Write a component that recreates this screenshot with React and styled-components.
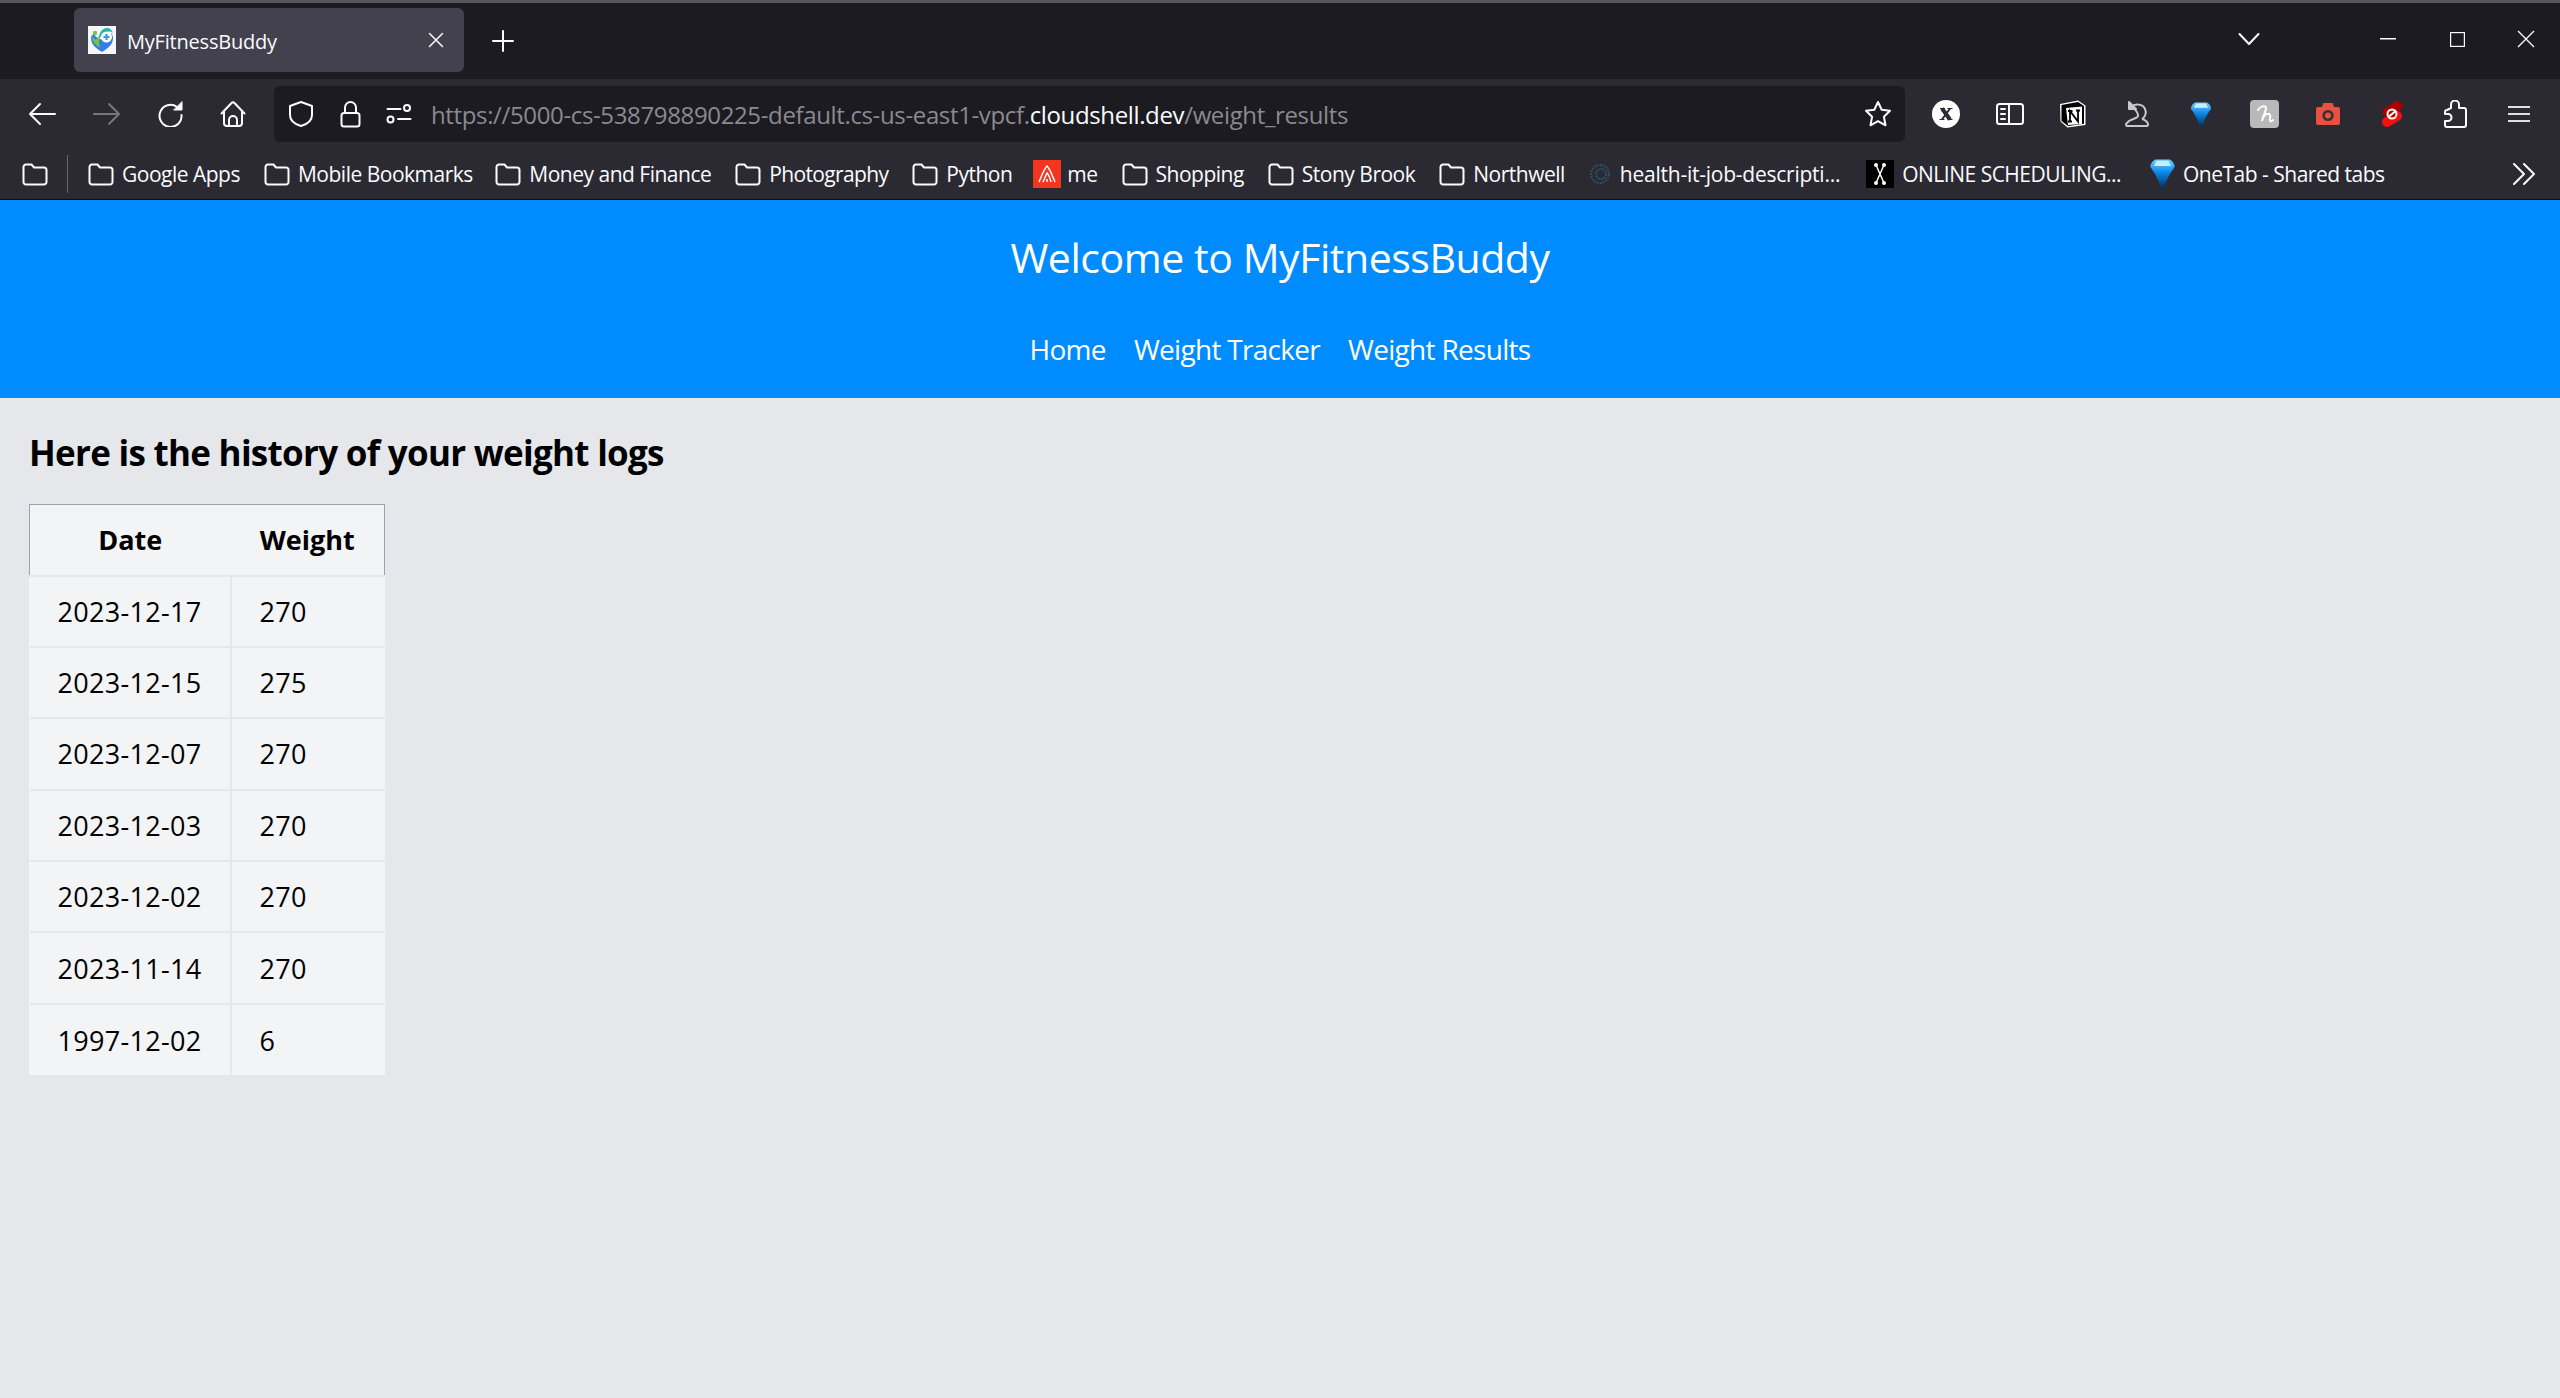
import React from 'react';
import styled, { createGlobalStyle } from 'styled-components';

const Global = createGlobalStyle`
  html, body { margin: 0; padding: 0; background: #e5e7eb; }
  body { font-family: "Open Sans", "Noto Sans", "Liberation Sans", sans-serif; }
  * { box-sizing: border-box; }
`;
const Page = styled.div`width: 2560px; height: 1398px; overflow: hidden; display: flex; flex-direction: column; background: #e5e7eb;`;
const TitleBar = styled.div`height: 79px; background: #1c1b22; border-top: 3px solid #55555a; display: flex; align-items: flex-start; padding-left: 74px;`;
const Tab = styled.div`width: 390px; height: 64px; margin-top: 5px; background: #42414d; border-radius: 6px; display: flex; align-items: center; padding: 0 20px 0 14px; color: #fbfbfe; font-size: 20px; letter-spacing: -0.2px;`;
const TabTitle = styled.span`margin-left: 11px; flex: 1; position: relative; top: 1px;`;
const IconBtn = styled.span`display: inline-flex; flex: none; align-items: center; justify-content: center; width: ${p => p.$w || 28}px; height: ${p => p.$h || 28}px; margin-left: ${p => p.$ml || 0}px;`;
const TitleRight = styled.div`margin-left: auto; display: flex; align-items: center; height: 72px; padding-right: 20px;`;
const NavBar = styled.div`height: 70px; background: #2b2a33; display: flex; align-items: center; padding-left: 28px;`;
const UrlBox = styled.div`width: 1631px; height: 56px; margin-left: 27px; background: #1c1b22; border-radius: 6px; display: flex; align-items: center; padding-left: 14px; padding-right: 13px; font-size: 24px; letter-spacing: -0.36px; color: #8a8a90; white-space: nowrap;`;
const UrlText = styled.span`margin-left: 19px; flex: 1;`;
const Host = styled.span`color: #fbfbfe;`;
const Extensions = styled.div`display: flex; align-items: center; margin-left: 9px;`;
const Slot = styled.span`display: inline-flex; align-items: center; justify-content: center; width: 63.700px; height: 40px;`;
const BookmarkBar = styled.div`height: 51px; background: #2b2a33; border-bottom: 1px solid #0c0c0d; display: flex; align-items: center; padding-left: 22px; padding-right: 24px; color: #fbfbfe; font-size: 21px; letter-spacing: -0.5px; white-space: nowrap;`;
const Divider = styled.span`width: 1px; height: 38px; background: #6a6a70; margin: 0 20px 0 19px;`;
const Bookmark = styled.span`display: inline-flex; align-items: center; gap: ${p => p.$gap || 8}px; margin-right: ${p => p.$mr || 24}px; letter-spacing: ${p => p.$ls ?? -0.5}px;`;
const Overflow = styled.span`margin-left: auto; display: inline-flex;`;
const Header = styled.header`height: 198px; background: #008cff; color: #fff; text-align: center; padding-top: 32px;`;
const Title = styled.h1`margin: 0; font-size: 41px; font-weight: 400; line-height: 50px; letter-spacing: -0.44px;`;
const Links = styled.nav`display: flex; justify-content: center; gap: 28px; margin-top: 49px; font-size: 28px; line-height: 36px; letter-spacing: -0.7px;`;
const Main = styled.main`padding: 32px 29px;`;
const Heading = styled.h2`margin: 0 0 28px; font-size: 35px; font-weight: 700; line-height: 46px; color: #000; letter-spacing: -0.72px; white-space: nowrap;`;
const Table = styled.table`border-collapse: collapse; background: #f3f4f6; font-size: 27px; color: #000; table-layout: fixed; width: 355px;`;
const Th = styled.th`width: ${p => p.$width}px; height: 71px; padding: 0 28px; border: 1px solid #9ca3af; border-bottom: 0; border-left-width: ${p => p.$first ? 1 : 0}px; border-right-width: ${p => p.$first ? 0 : 1}px; font-weight: 700; text-align: center; white-space: nowrap;`;
const Td = styled.td`height: 71.400px; padding: 0 0 0 28px; border-top: 2px solid #e5e7eb; border-right: ${p => p.$first ? '2px solid #e5e7eb' : '0'}; text-align: left; letter-spacing: 0.3px; white-space: nowrap;`;

const s = { fill: 'none', stroke: '#fbfbfe', strokeWidth: 2, strokeLinecap: 'round', strokeLinejoin: 'round' };
const Folder = () => <svg width="26" height="23" viewBox="0 0 26 23" {...s}><path d="M1.500 4a2.500 2.500 0 0 1 2.500-2.500h5.500l2.500 3h10a2.500 2.500 0 0 1 2.500 2.500v12a2.500 2.500 0 0 1-2.500 2.500H4A2.500 2.500 0 0 1 1.500 19z" /></svg>;
const Favicon = () => (
  <svg width="28" height="28" viewBox="0 0 28 28">
    <rect width="28" height="28" fill="#f4f6f8" />
    <path d="M3 12c0 7 6 11 11 14 5-3 11-7 11-14 0-2-1-4-2-5-1 5-6 8-11 6-3-1-5-3-6-5-2 1-3 2-3 4z" fill="#2f7fe6" />
    <path d="M4 10c0 6 4 9 8 12-1-5-2-9 2-14-3 2-5 4-6 6-1-1-3-2-4-4z" fill="#7cc242" />
    <circle cx="7" cy="7" r="2.200" fill="#7cc242" />
    <path d="M11 12C11 6 15 2 19 2c3 0 5 2 6 5-2-2-5-2-7 0-3 1-5 3-7 5z" fill="#1fb5b0" />
    <circle cx="18.500" cy="11" r="5.500" fill="#fff" />
    <path d="M18.500 8v6M15.500 11h6" stroke="#2f9fe6" strokeWidth="2.200" />
  </svg>
);
const Drop = ({ w = 22, h = 26, id }) => (
  <svg width={w} height={h} viewBox="0 0 22 26">
    <defs><linearGradient id={id} x1="0" x2="0" y1="0" y2="1"><stop offset="0" stopColor="#6fd0ff" /><stop offset=".45" stopColor="#0a86e8" /><stop offset="1" stopColor="#052c50" /></linearGradient></defs>
    <path d="M5 .5h12c2.500 1 4.500 3.500 4.500 6.500-3.500 5-7.500 11-9 19h-3C8 18 4 12 .5 7 .5 4 2.500 1.500 5 .5z" fill={`url(#${id})`} />
    <path d="M6 1.500h10l2.500 4.500H3.500z" fill="#c4efff" />
  </svg>
);

const rows = [['2023-12-17','270'],['2023-12-15','275'],['2023-12-07','270'],['2023-12-03','270'],['2023-12-02','270'],['2023-11-14','270'],['1997-12-02','6']];

export default function App() {
  return (
    <Page>
      <Global />
      <TitleBar>
        <Tab>
          <Favicon />
          <TabTitle>MyFitnessBuddy</TabTitle>
          <svg width="16" height="16" viewBox="0 0 16 16" {...s} strokeWidth="1.500"><path d="M1.500 1.500l13 13M14.500 1.500l-13 13" /></svg>
        </Tab>
        <IconBtn $ml={25} $h={76}><svg width="22" height="22" viewBox="0 0 22 22" {...s}><path d="M11 1v20M1 11h20" /></svg></IconBtn>
        <TitleRight>
          <IconBtn><svg width="22" height="14" viewBox="0 0 22 14" {...s}><path d="M1.500 2 11 12 20.500 2" /></svg></IconBtn>
          <IconBtn $ml={111}><svg width="16" height="2" viewBox="0 0 16 2"><rect width="16" height="1.500" fill="#fbfbfe" /></svg></IconBtn>
          <IconBtn $ml={41}><svg width="15" height="15" viewBox="0 0 15 15" fill="none" stroke="#fbfbfe" strokeWidth="1.200"><rect x=".6" y=".6" width="13.800" height="13.800" /></svg></IconBtn>
          <IconBtn $ml={41}><svg width="18" height="18" viewBox="0 0 18 18" fill="none" stroke="#fbfbfe" strokeWidth="1.300"><path d="M1 1l16 16M17 1 1 17" /></svg></IconBtn>
        </TitleRight>
      </TitleBar>
      <NavBar>
        <svg width="28" height="24" viewBox="0 0 28 24" {...s}><path d="M27 12H2M12 2 2 12l10 10" /></svg>
        <IconBtn $ml={37}><svg width="28" height="24" viewBox="0 0 28 24" {...s} stroke="#77767c"><path d="M1 12h25M16 2l10 10-10 10" /></svg></IconBtn>
        <IconBtn $ml={35}><svg width="26" height="26" viewBox="0 0 26 26" {...s}><path d="M20 6a11 11 0 1 0 4.500 8" /><path d="M25 1v8h-8z" fill="#fbfbfe" strokeWidth="1" /></svg></IconBtn>
        <IconBtn $ml={35}><svg width="26" height="28" viewBox="0 0 26 28" {...s}><path d="M1.500 13.500 11.500 3a2 2 0 0 1 3 0l10 10.500" /><path d="M4 11v12a3 3 0 0 0 3 3h12a3 3 0 0 0 3-3V11" /><path d="M9 26v-6a4 4 0 0 1 8 0v6" /></svg></IconBtn>
        <UrlBox>
          <IconBtn $w={26}><svg width="26" height="28" viewBox="0 0 26 28" {...s}><path d="M13 2 2 6v9c0 5 4 9 11 11 7-2 11-6 11-11V6z" /></svg></IconBtn>
          <IconBtn $ml={25} $w={22}><svg width="21" height="28" viewBox="0 0 21 28" {...s}><rect x="1.500" y="13" width="18" height="13.500" rx="2.500" /><path d="M5 13V7.500a5.500 5.500 0 0 1 11 0V13" /></svg></IconBtn>
          <IconBtn $ml={25} $w={26}><svg width="26" height="20" viewBox="0 0 26 20" {...s}><path d="M1.500 5h13M12 15h12.500" /><circle cx="21" cy="4" r="3" /><circle cx="4.500" cy="15.500" r="3" /></svg></IconBtn>
          <UrlText>https://5000-cs-538798890225-default.cs-us-east1-vpcf.<Host>cloudshell.dev</Host>/weight_results</UrlText>
          <svg width="28" height="28" viewBox="0 0 28 28" {...s}><path d="m14 2 3.700 7.800 8.300 1-6.100 5.900 1.600 8.600-7.500-4.200-7.500 4.200 1.600-8.600L2 10.800l8.300-1z" /></svg>
        </UrlBox>
        <Extensions>
          <Slot><svg width="28" height="28" viewBox="0 0 28 28"><circle cx="14" cy="14" r="14" fill="#fff" /><path d="M10 8.500l8 11" stroke="#2b2a33" strokeWidth="4" /><path d="M18 8.500l-8 11" stroke="#2b2a33" strokeWidth="2" /><path d="M8 8.500h5M15.500 8.500h5M7.500 19.500h5M15.500 19.500h5" stroke="#2b2a33" strokeWidth="1.200" /></svg></Slot>
          <Slot><svg width="28" height="22" viewBox="0 0 28 22" {...s}><rect x="1" y="1" width="26" height="20" rx="2.500" /><path d="M13 1v20M5 6h4M5 11h4M5 16h4" /></svg></Slot>
          <Slot><svg width="28" height="28" viewBox="0 0 28 28"><path d="M1 4 19 .5l7.500 5V25l-18 2.500-7-6z" fill="#fff" /><path d="M2.500 5 19 2l6 4v17.800l-16 2.200-6.500-5z" fill="#000" /><path d="M7 8l16-1.500V24L9 25z" fill="#fff" /><path d="M11 21.500V11l8 10.500V10.500M9 11h4.500M17 10.500h4M9 21.500h4" stroke="#000" strokeWidth="1.800" fill="none" /></svg></Slot>
          <Slot><svg width="26" height="26" viewBox="0 0 26 26" fill="none" stroke="#c8c8cc" strokeWidth="2" strokeLinejoin="round"><path d="M5 1v7h7z" fill="#c8c8cc" /><path d="M7 6c4-4 12-3 14 2 2 4 0 8-3 10" /><path d="M10 8c3 2 4 5 4 7 0 2-6 3-9 5l-3 3c0 1 0 2 1 2h20c1 0 1-1 1-2s-2-4-6-5" /></svg></Slot>
          <Slot><Drop id="ext" w={22} h={25} /></Slot>
          <Slot><svg width="29" height="28" viewBox="0 0 29 28"><rect width="29" height="28" rx="4" fill="#b9b9b9" /><path d="M8 10c2-4 8-5 8-2 0 3-3 8-4 13 1-5 4-8 7-7 3 1 0 5 1 7 1 1 2 0 3-1" fill="none" stroke="#fff" strokeWidth="2" strokeLinecap="round" /></svg></Slot>
          <Slot><svg width="24" height="22" viewBox="0 0 24 22"><path d="M2 4h4l1-3a1 1 0 0 1 1-1h8a1 1 0 0 1 1 1l1 3h4a2 2 0 0 1 2 2v14a2 2 0 0 1-2 2H2a2 2 0 0 1-2-2V6a2 2 0 0 1 2-2z" fill="#e8503f" /><circle cx="12" cy="12.500" r="4.300" fill="none" stroke="#3a2f33" strokeWidth="2.600" /></svg></Slot>
          <Slot><svg width="22" height="26" viewBox="0 0 22 26"><path d="M6.500 11 16.500 5" stroke="#a80000" strokeWidth="10" strokeLinecap="round" /><path d="M6 21 16 15" stroke="#ff0d0d" strokeWidth="10" strokeLinecap="round" /><circle cx="11" cy="13" r="4.500" fill="#c00000" stroke="#fff" strokeWidth="2" /><path d="M8 15.500l6-5" stroke="#fff" strokeWidth="2" /></svg></Slot>
          <Slot><svg width="24" height="28" viewBox="0 0 24 28" {...s}><path d="M8 8V4.500a4 4 0 0 1 8 0V8h5a2 2 0 0 1 2 2v15a2 2 0 0 1-2 2H4a2 2 0 0 1-2-2v-4h3a3.500 3.500 0 0 0 0-7H2v-2a2 2 0 0 1 2-2z" /></svg></Slot>
          <Slot><svg width="22" height="18" viewBox="0 0 22 18" fill="none" stroke="#e0e0e4" strokeWidth="2"><path d="M0 2h22M0 9h22M0 16h22" /></svg></Slot>
        </Extensions>
      </NavBar>
      <BookmarkBar>
        <Folder />
        <Divider />
        <Bookmark><Folder />Google Apps</Bookmark>
        <Bookmark $mr={22.5}><Folder />Mobile Bookmarks</Bookmark>
        <Bookmark><Folder />Money and Finance</Bookmark>
        <Bookmark $ls={-0.65}><Folder />Photography</Bookmark>
        <Bookmark $mr={21}><Folder />Python</Bookmark>
        <Bookmark $gap={6}>
          <svg width="28" height="28" viewBox="0 0 28 28"><rect width="28" height="28" fill="#f4361f" /><path d="M6 22C9 15 11 9 14 6c3 3 5 9 8 16M10 22c2-4 3-7 4-9 2 2 3 5 4 9M14 22v-3" fill="none" stroke="#fff" strokeWidth="1.500" /></svg>
          me
        </Bookmark>
        <Bookmark><Folder />Shopping</Bookmark>
        <Bookmark><Folder />Stony Brook</Bookmark>
        <Bookmark $mr={23}><Folder />Northwell</Bookmark>
        <Bookmark $gap={8} $mr={26} $ls={-0.24}>
          <svg width="24" height="24" viewBox="0 0 24 24" fill="none" stroke="#2d5063" strokeWidth="2" strokeDasharray="2 1"><circle cx="12" cy="12" r="9" /><circle cx="13" cy="12" r="5" /></svg>
          health-it-job-descripti...
        </Bookmark>
        <Bookmark $mr={28}>
          <svg width="28" height="28" viewBox="0 0 28 28"><rect width="28" height="28" fill="#000" /><path d="M10 5l8 18M18 5l-8 18" stroke="#fff" strokeWidth="1.500" /><circle cx="10" cy="5" r="2" fill="#fff" /><circle cx="18" cy="5" r="2" fill="#fff" /><circle cx="10" cy="23" r="2" fill="#fff" /><circle cx="18" cy="23" r="2" fill="#fff" /></svg>
          ONLINE SCHEDULING...
        </Bookmark>
        <Bookmark $gap={7}><Drop id="bm" w={27} h={30} />OneTab - Shared tabs</Bookmark>
        <Overflow><svg width="24" height="22" viewBox="0 0 24 22" {...s}><path d="M2 1l10 10L2 21M12 1l10 10-10 10" /></svg></Overflow>
      </BookmarkBar>
      <Header>
        <Title>Welcome to MyFitnessBuddy</Title>
        <Links><span>Home</span><span>Weight Tracker</span><span>Weight Results</span></Links>
      </Header>
      <Main>
        <Heading>Here is the history of your weight logs</Heading>
        <Table>
          <thead><tr><Th $first $width={201}>Date</Th><Th $width={154}>Weight</Th></tr></thead>
          <tbody>{rows.map(r => <tr key={r[0]}><Td $first>{r[0]}</Td><Td>{r[1]}</Td></tr>)}</tbody>
        </Table>
      </Main>
    </Page>
  );
}
